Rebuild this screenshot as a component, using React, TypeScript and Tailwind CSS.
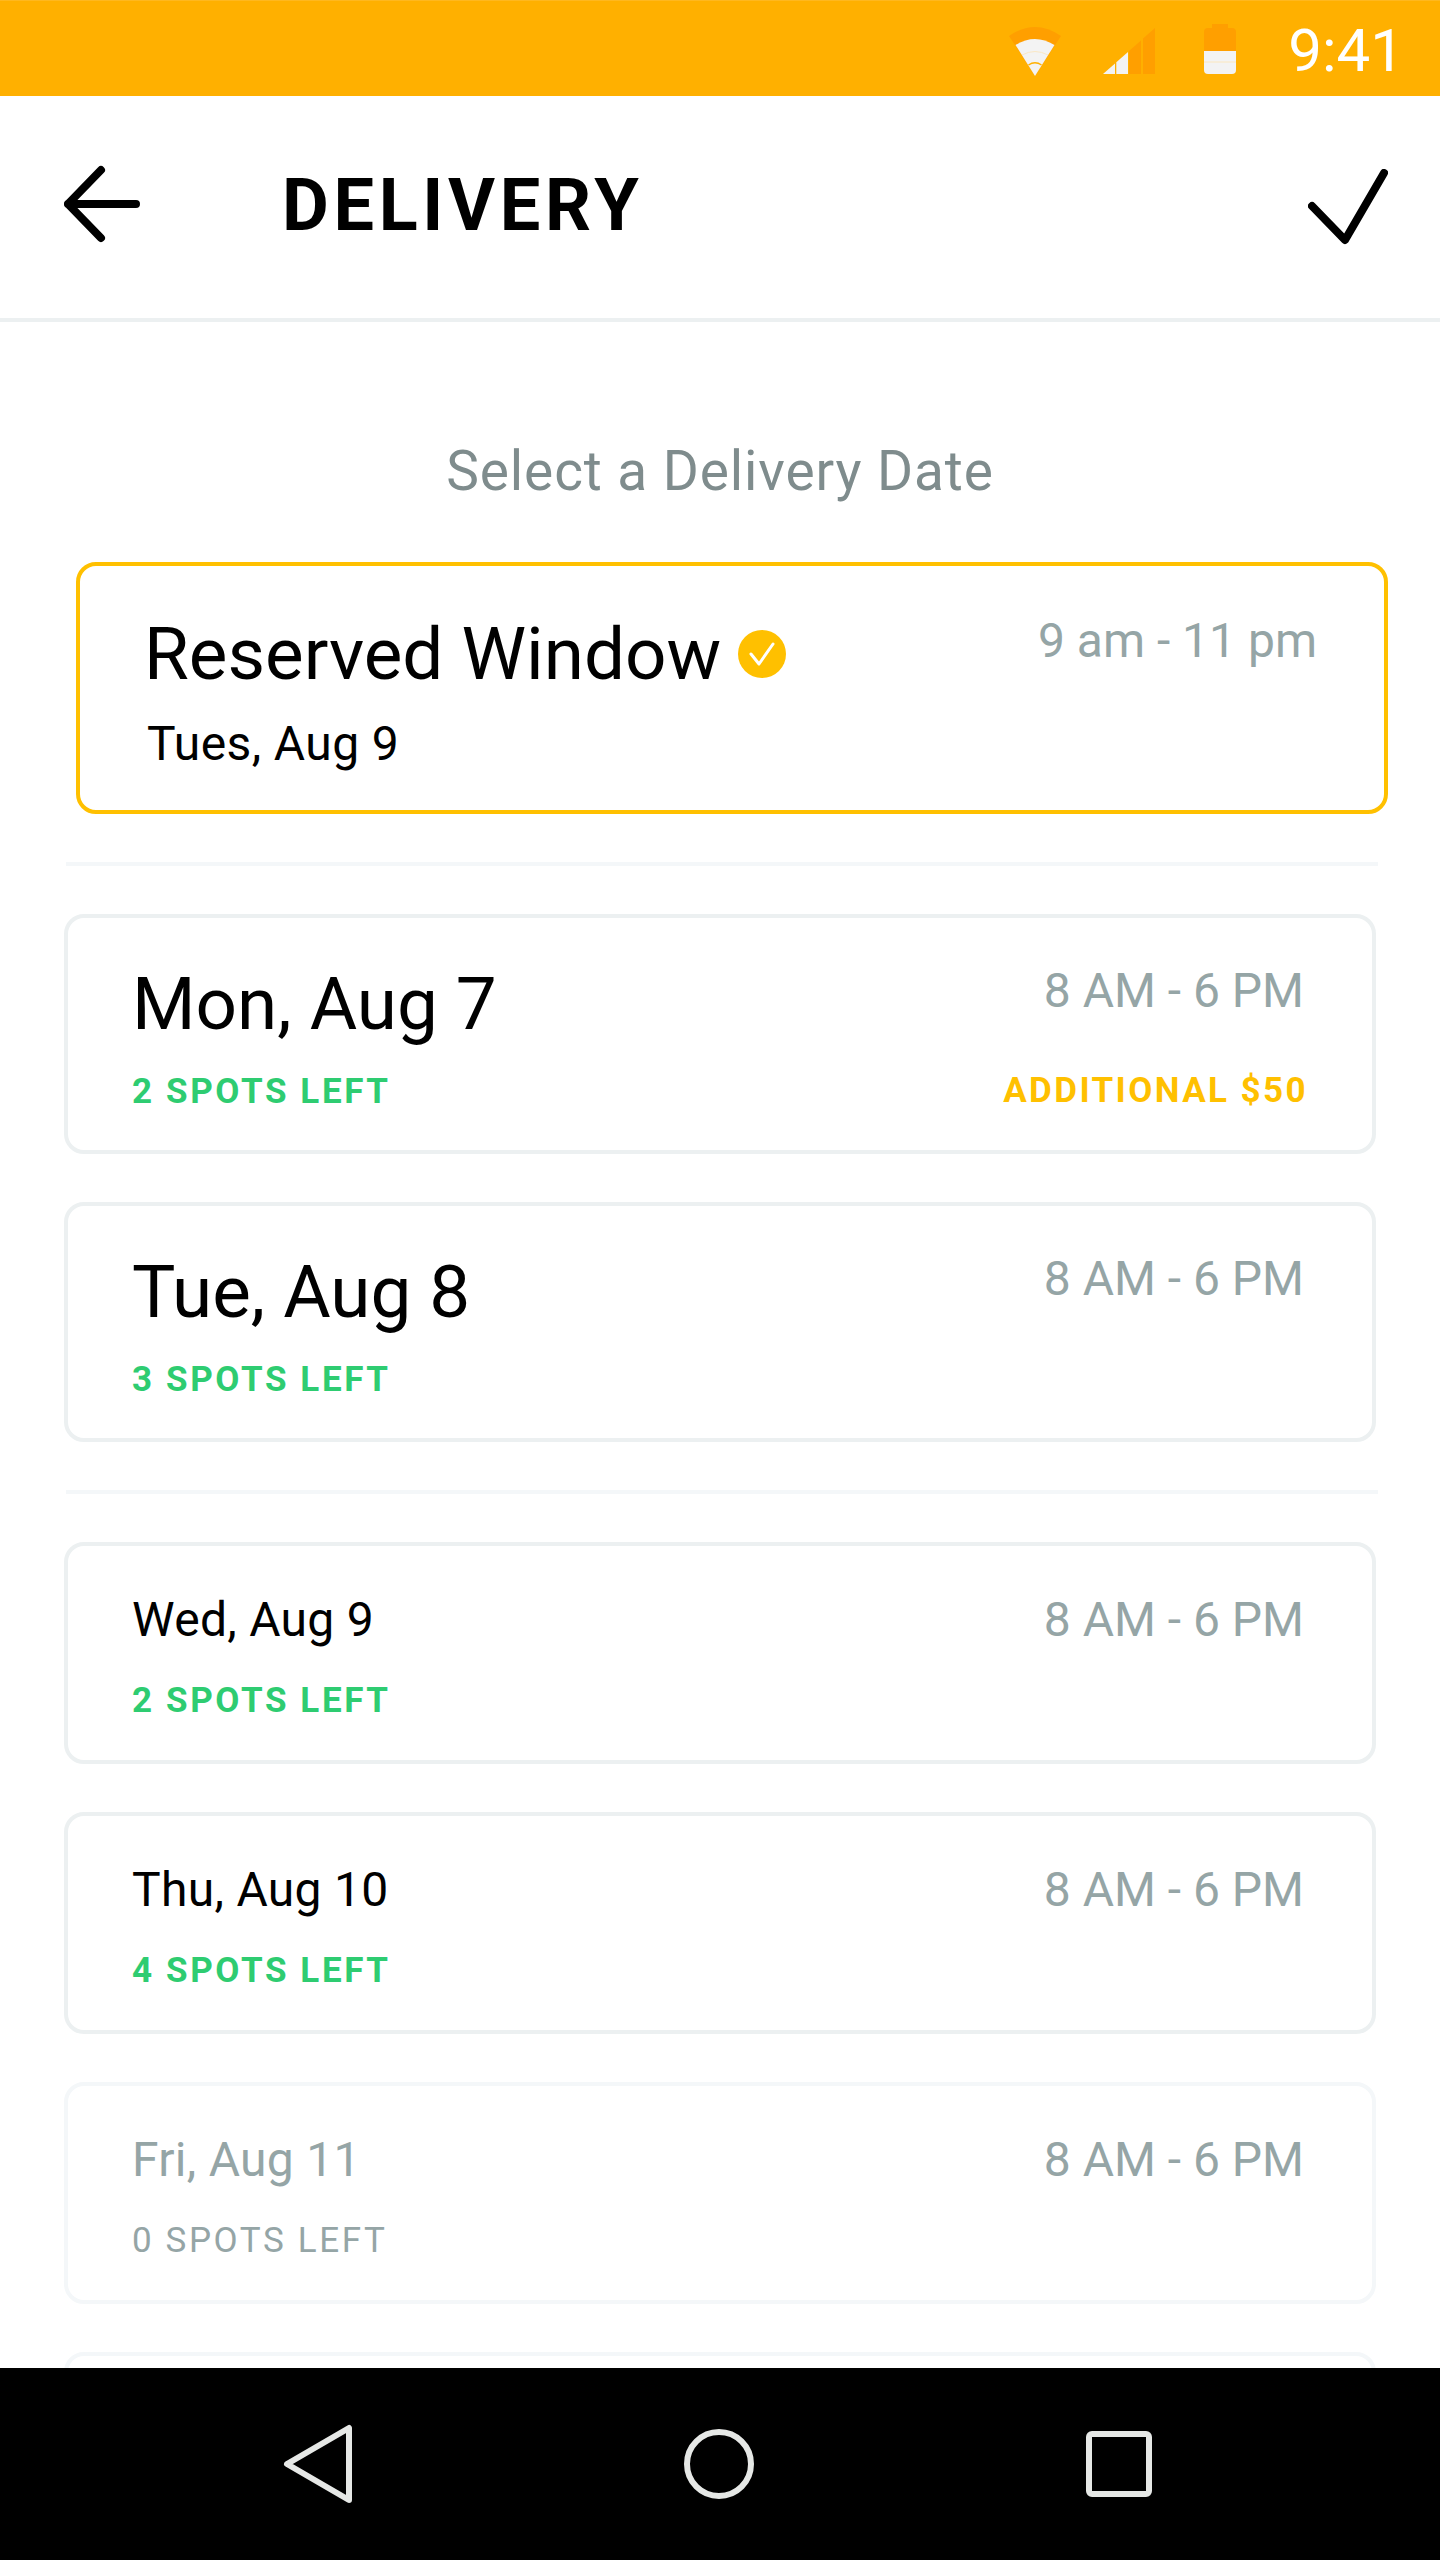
import React from 'react';

interface DayRow {
  day: string;
  spots: string;
  extra?: string;
}

const featured: DayRow[] = [
  { day: 'Mon, Aug 7', spots: '2 SPOTS LEFT', extra: 'ADDITIONAL $50' },
  { day: 'Tue, Aug 8', spots: '3 SPOTS LEFT' },
];

const regular: DayRow[] = [
  { day: 'Wed, Aug 9', spots: '2 SPOTS LEFT' },
  { day: 'Thu, Aug 10', spots: '4 SPOTS LEFT' },
];

const StatusIcons = () => (
  <>
    <svg width="52" height="49" viewBox="0 0 52 49">
      <path d="M0 9 Q26 -9 52 9 L26 49 Z" fill="#FF9F00" />
      <path d="M6.500 18 Q26 6 45.500 18 L26 49 Z" fill="#F3F3F3" />
      <path d="M13 28 Q26 21 39 28" fill="none" stroke="#FCE3B0" strokeWidth="0.7" />
      <path d="M19.500 38 Q26 33.500 32.500 38" fill="none" stroke="#FFB000" strokeWidth="1.500" />
    </svg>
    <svg width="52" height="46" viewBox="0 0 52 46" className="ml-[42px]">
      <path d="M0 46 L12 35.400 V46 Z" fill="#F3F3F3" />
      <path d="M13.300 46 V34.200 L25 23.900 V46 Z" fill="#F3F3F3" />
      <path d="M26 46 V23 L38 12.400 V46 Z" fill="#FF9F00" />
      <path d="M40 46 V10.600 L52 0 V46 Z" fill="#FF9F00" />
    </svg>
    <svg width="32" height="50" viewBox="0 0 32 50" className="ml-[49px] mt-[-4px]">
      <path d="M8 0 H24 V4 H28 Q32 4 32 8 V27 H0 V8 Q0 4 4 4 H8 Z" fill="#FF9F00" />
      <path d="M0 27 H32 V46 Q32 50 28 50 H4 Q0 50 0 46 Z" fill="#F3F3F3" />
      <path d="M0 38 H32" stroke="#FCE3B0" strokeWidth="0.8" />
    </svg>
  </>
);

const DayCard = ({ row, large }: { row: DayRow; large?: boolean }) => (
  <div
    className={`flex shrink-0 justify-between rounded-[20px] border-4 border-[#ECF0F1] pl-[64px] pr-[68px] ${
      large ? 'h-[240px] pt-[44px]' : 'h-[222px] pt-[41px]'
    }`}
  >
    <div>
      <div className={`text-black ${large ? 'text-[72.800px] leading-[84px]' : 'text-[48px] leading-[66px] tracking-[0.3px]'}`}>
        {row.day}
      </div>
      <div
        className={`text-[35px] font-bold leading-[42px] tracking-[2.6px] text-[#2ECC71] ${large ? 'mt-[25px]' : 'mt-[27px]'}`}
      >
        {row.spots}
      </div>
    </div>
    <div className="flex flex-col items-end">
      <div className={`text-[48px] leading-[56px] text-[#95A5A6] ${large ? 'mt-[1px]' : 'mt-[5px]'}`}>8 AM - 6 PM</div>
      {row.extra && (
        <div className="mr-[-4px] mt-[51px] text-[35px] font-bold leading-[42px] tracking-[2.4px] text-[#FFC000]">{row.extra}</div>
      )}
    </div>
  </div>
);

export default function App() {
  return (
    <div className="flex h-[2560px] w-[1440px] flex-col overflow-hidden bg-white font-['Roboto',sans-serif]">
      <div className="flex h-[96px] shrink-0 items-center justify-end border-t border-[#FFB81F] bg-[#FFB000] pr-[36px] pt-[5px]">
        <StatusIcons />
        <span className="ml-[52px] text-[60px] leading-none text-white">9:41</span>
      </div>

      <div className="flex h-[226px] shrink-0 items-center justify-between border-b-4 border-[#ECF0F1] pl-[64px] pr-[52px]">
        <div className="flex items-center pb-[6px]">
          <svg width="78" height="80" viewBox="0 0 78 80" fill="none" stroke="black" strokeWidth="8" strokeLinecap="round" strokeLinejoin="round">
            <path d="M37 6 L4 40 L37 74 M4 40 H72" />
          </svg>
          <h1 className="ml-[140px] mt-[3px] text-[72px] font-bold leading-none tracking-[4.700px] text-black">DELIVERY</h1>
        </div>
        <svg width="80" height="76" viewBox="0 0 80 76" fill="none" stroke="black" strokeWidth="8" strokeLinecap="round" strokeLinejoin="round">
          <path d="M4 37 L37 71 L76 4" />
        </svg>
      </div>

      <div className="flex min-h-0 flex-1 flex-col overflow-hidden px-[64px]">
        <p className="mt-[114px] text-center text-[55px] leading-[70px] tracking-[0.9px] text-[#7F8C8D]">Select a Delivery Date</p>

        <div className="ml-[12px] mr-[-12px] mt-[56px] flex h-[252px] shrink-0 justify-between rounded-[20px] border-4 border-[#FFC000] pl-[64px] pr-[67px] pt-[46px]">
          <div>
            <div className="flex items-center text-[72.800px] leading-[84px] text-black">
              Reserved Window
              <svg width="48" height="48" viewBox="0 0 48 48" className="ml-[17px]">
                <circle cx="24" cy="24" r="24" fill="#FFC000" />
                <path d="M13 24 L21 34 L35 14" fill="none" stroke="white" strokeWidth="3" strokeLinecap="round" strokeLinejoin="round" />
              </svg>
            </div>
            <div className="ml-[3px] mt-[20px] text-[48px] leading-[56px] tracking-[0.4px] text-black">Tues, Aug 9</div>
          </div>
          <div className="mt-[1px] text-[48px] leading-[56px] text-[#95A5A6]">9 am - 11 pm</div>
        </div>

        <div className="ml-[2px] mr-[-2px] mt-[48px] h-[4px] shrink-0 bg-[#F4F7F9]" />

        <div className="mt-[48px] flex shrink-0 flex-col gap-[48px]">
          {featured.map((row) => (
            <DayCard key={row.day} row={row} large />
          ))}
        </div>

        <div className="ml-[2px] mr-[-2px] mt-[48px] h-[4px] shrink-0 bg-[#F4F7F9]" />

        <div className="mt-[48px] flex flex-col gap-[48px]">
          {regular.map((row) => (
            <DayCard key={row.day} row={row} />
          ))}

          <div className="flex h-[222px] shrink-0 justify-between rounded-[20px] border-4 border-[#F4F7F9] pl-[64px] pr-[68px] pt-[41px]">
            <div>
              <div className="text-[48px] leading-[66px] tracking-[0.3px] text-[#95A5A6]">Fri, Aug 11</div>
              <div className="mt-[27px] text-[35px] leading-[42px] tracking-[2.6px] text-[#95A5A6]">0 SPOTS LEFT</div>
            </div>
            <div className="mt-[5px] text-[48px] leading-[56px] text-[#95A5A6]">8 AM - 6 PM</div>
          </div>

          <div className="h-[222px] shrink-0 rounded-[20px] border-4 border-[#F4F7F9]" />
        </div>
      </div>

      <div className="flex h-[192px] shrink-0 items-center justify-between bg-black pl-[283px] pr-[288px]">
        <svg width="72" height="80" viewBox="0 0 72 80" fill="none" stroke="#E6E8E6" strokeWidth="6" strokeLinejoin="round">
          <path d="M66 4 V76 L4 40 Z" />
        </svg>
        <svg width="70" height="70" viewBox="0 0 70 70" fill="none" stroke="#E6E8E6" strokeWidth="6" className="mr-[3px]">
          <circle cx="35" cy="35" r="32" />
        </svg>
        <svg width="66" height="66" viewBox="0 0 66 66" fill="none" stroke="#E6E8E6" strokeWidth="6">
          <rect x="3" y="3" width="60" height="60" rx="3" />
        </svg>
      </div>
    </div>
  );
}
